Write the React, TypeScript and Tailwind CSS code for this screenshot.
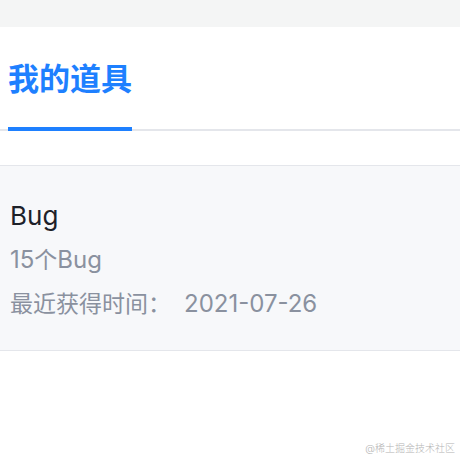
import React from 'react';

const font = { fontFamily: 'Inter, "Noto Sans CJK SC", sans-serif' };

const App = () => {
  return (
    <div className="relative min-h-[460px] bg-white" style={font}>
      <div className="h-[27px] bg-[#f4f5f5]" />

      {/* tabs */}
      <div className="flex border-b-2 border-[#e4e6eb] bg-white">
        <div className="ml-2 -mb-[2px] h-[104px] flex items-center border-b-4 border-[#1e80ff] pt-[2px]">
          <span className="text-[31px] font-semibold leading-none text-[#1e80ff]">我的道具</span>
        </div>
      </div>

      <div className="h-[34px]" />

      {/* 道具卡片 */}
      <div className="border-y border-[#e4e6eb] bg-[#f7f8fa] pl-[10px] pt-[28px] pb-[24px]">
        <div className="text-[26px] leading-[44px] text-[#1d2129]">Bug</div>
        <div className="text-[23px] leading-[44px] text-[#8a919f]">
          <span className="text-[24px]">15</span>个<span className="text-[24px]">Bug</span>
        </div>
        <div className="text-[23px] leading-[44px] text-[#8a919f]">
          最近获得时间：<span className="ml-[13px] text-[24px]">2021-07-26</span>
        </div>
      </div>

      <div className="absolute right-[5px] bottom-[4px] text-[10px] font-light text-[#b4b4b4]">@稀土掘金技术社区</div>
    </div>
  );
};

export default App;
